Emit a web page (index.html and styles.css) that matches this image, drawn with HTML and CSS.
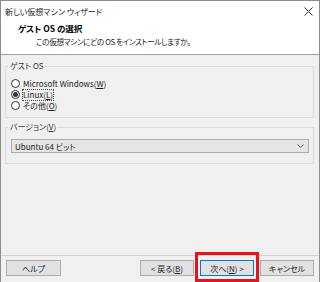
FILE: index.html
```html
<!DOCTYPE html>
<html lang="ja">
<head>
<meta charset="utf-8">
<link rel="stylesheet" href="styles.css">
</head>
<body>
<div class="window">
  <div class="titlebar">
    <span class="title">新しい仮想マシン ウィザード</span>
    <svg class="close" width="9" height="9" viewBox="0 0 9 9"><path d="M0.5 0.5L8.5 8.5M8.5 0.5L0.5 8.5" stroke="#333" stroke-width="1" fill="none"/></svg>
  </div>
  <div class="header">
    <div class="h-title">ゲスト OS の選択</div>
    <div class="h-sub">この仮想マシンにどの OS をインストールしますか。</div>
  </div>
  <div class="body">
    <div class="group g1">
      <span class="legend">ゲスト OS</span>
      <div class="radio"><span class="circle"></span><span>Microsoft Windows(<u>W</u>)</span></div>
      <div class="radio"><span class="circle on"></span><span class="focus">Linux(<u>L</u>)</span></div>
      <div class="radio"><span class="circle"></span><span>その他(<u>O</u>)</span></div>
    </div>
    <div class="group g2">
      <span class="legend">バージョン(<u>V</u>)</span>
      <div class="combo">
        <span>Ubuntu 64 ビット</span>
        <svg width="7" height="4" viewBox="0 0 7 4"><path d="M0.5 0.5L3.5 3.5L6.5 0.5" stroke="#555" stroke-width="1" fill="none"/></svg>
      </div>
    </div>
    <div class="footer">
      <div class="btn help">ヘルプ</div>
      <div class="spacer"></div>
      <div class="btn">&lt; 戻る(<u>B</u>)</div>
      <div class="btn default">次へ(<u>N</u>) &gt;</div>
      <div class="btn">キャンセル</div>
    </div>
  </div>
  <div class="highlight"></div>
</div>
</body>
</html>
```
FILE: styles.css
```css
* { box-sizing: border-box; }
html, body { margin: 0; padding: 0; }
body {
  width: 320px;
  height: 282px;
  font-family: "Noto Sans CJK JP", "Noto Sans", sans-serif;
  font-size: 8px;
  line-height: 11px;
  font-feature-settings: "palt" 1;
  color: #1a1a1a;
  overflow: hidden;
}
.window {
  position: relative;
  width: 320px;
  height: 282px;
  border: 1px solid #8c8c8c;
  border-bottom: none;
  background: #f0f0f0;
  display: flex;
  flex-direction: column;
}
.titlebar {
  height: 20px;
  background: #fff;
  display: flex;
  align-items: center;
  justify-content: space-between;
  padding: 0 5px 0 4px;
}
.title { color: #222; }
.close { margin-right: 1px; }
.header {
  height: 34px;
  background: #fff;
  border-bottom: 1px solid #a0a0a0;
  padding: 1px 0 0 17px;
}
.h-title {
  font-weight: bold;
  font-size: 8.5px;
  line-height: 12px;
  color: #000;
}
.h-sub {
  padding-left: 18px;
  line-height: 12px;
  margin-top: 2px;
  font-size: 7.6px;
  letter-spacing: -0.35px;
}
.body {
  flex: 1;
  display: flex;
  flex-direction: column;
  padding: 11px 5px 0 4px;
}
.group {
  position: relative;
  border: 1px solid #dcdcdc;
}
.legend {
  position: absolute;
  top: -7px;
  left: 3px;
  padding: 0 1px;
  background: #f0f0f0;
  line-height: 12px;
  color: #333;
}
.g1 {
  height: 52px;
  padding: 11px 0 0 5px;
}
.radio {
  display: flex;
  align-items: center;
  height: 11px;
  gap: 3px;
}
.circle {
  width: 9px;
  height: 9px;
  border: 1px solid #333;
  border-radius: 50%;
  background: #fff;
  display: flex;
  align-items: center;
  justify-content: center;
}
.circle.on::after {
  content: "";
  width: 5px;
  height: 5px;
  border-radius: 50%;
  background: #333;
}
.focus {
  outline: 1px dotted #444;
  line-height: 10px;
}
.g2 {
  margin-top: 9px;
  height: 37px;
  padding: 11px 4px 0 5px;
}
.combo {
  height: 14px;
  border: 1px solid #adadad;
  background: #e5e5e5;
  display: flex;
  align-items: center;
  justify-content: space-between;
  padding: 0 4px 0 3px;
}
.footer {
  margin-top: auto;
  margin-left: -4px;
  margin-right: -5px;
  border-top: 1px solid #d2d2d2;
  height: 27px;
  display: flex;
  align-items: flex-start;
  padding: 4px 5px 0 5px;
  gap: 6px;
}
.spacer { flex: 1; }
.btn {
  width: 54px;
  height: 16px;
  border: 1px solid #adadad;
  background: #e1e1e1;
  display: flex;
  align-items: center;
  justify-content: center;
  color: #222;
}
.btn.help { width: 55px; }
.btn.default {
  border-color: #0078d7;
}
.highlight {
  position: absolute;
  left: 194px;
  top: 251px;
  width: 64px;
  height: 30px;
  border: 3px solid #e8141c;
}
```
